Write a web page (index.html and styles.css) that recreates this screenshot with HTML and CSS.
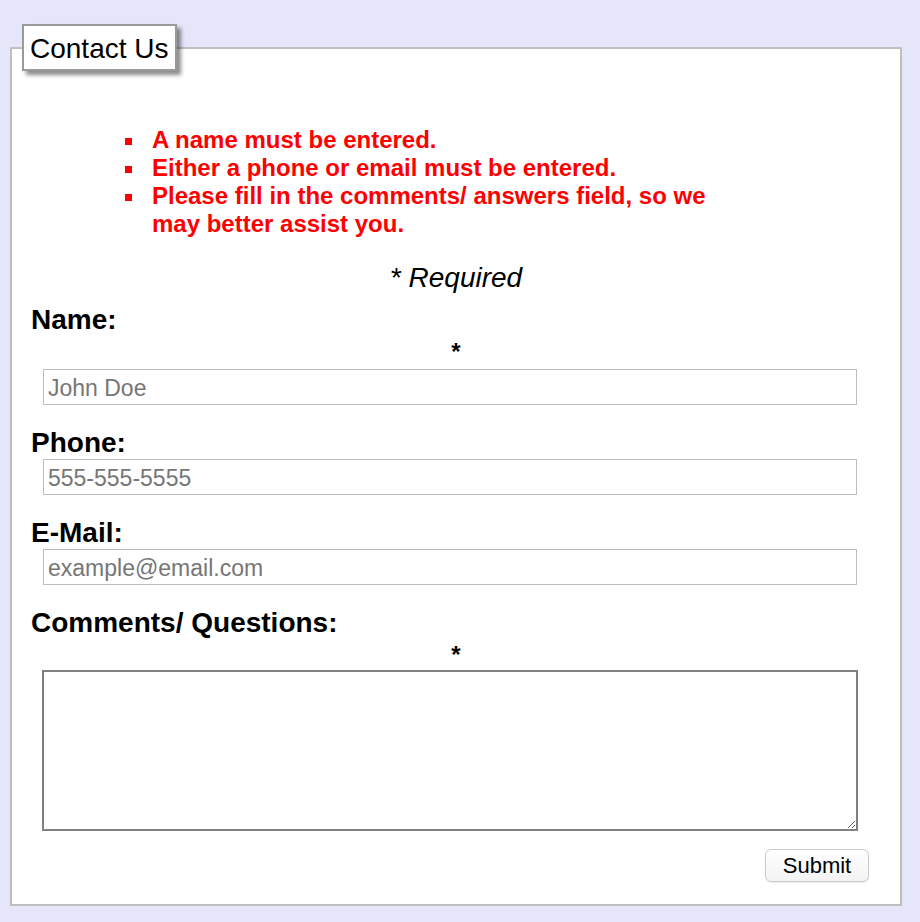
FILE: index.html
```html
<!DOCTYPE html>
<html lang="en">
<head>
<meta charset="utf-8">
<title>Contact Us</title>
<link rel="stylesheet" href="styles.css">
</head>
<body>
<form class="contact" onsubmit="return false">
  <fieldset class="panel">
    <legend class="panel-title">Contact Us</legend>
    <div class="panel-body">
      <ul class="errors">
        <li>A name must be entered.</li>
        <li>Either a phone or email must be entered.</li>
        <li>Please fill in the comments/ answers field, so we may better assist you.</li>
      </ul>
      <p class="required-note">* Required</p>
      <div class="field">
        <label class="field-label" for="name">Name:</label>
        <div class="req-mark">*</div>
        <input class="text-input spaced" id="name" type="text" placeholder="John Doe">
      </div>
      <div class="field">
        <label class="field-label" for="phone">Phone:</label>
        <input class="text-input" id="phone" type="text" placeholder="555-555-5555">
      </div>
      <div class="field">
        <label class="field-label" for="email">E-Mail:</label>
        <input class="text-input" id="email" type="text" placeholder="example@email.com">
      </div>
      <div class="field field-last">
        <label class="field-label" for="comments">Comments/ Questions:</label>
        <div class="req-mark">*</div>
        <textarea class="text-area" id="comments"></textarea>
      </div>
      <div class="actions">
        <button class="submit" type="submit">Submit</button>
      </div>
    </div>
  </fieldset>
</form>
</body>
</html>
```

FILE: styles.css
```css
html {
  background: #e6e6fa;
}

body {
  margin: 8px;
  background: #e6e6fa;
  font-family: "Liberation Sans", Arial, sans-serif;
  color: #000;
}

.contact {
  margin: 0;
}

.panel {
  box-sizing: border-box;
  width: 892px;
  margin: 16px 2px 0;
  padding: 0 10px;
  border: 2px solid #bfbfbf;
  background: #fff;
}

.panel-title {
  padding: 6px 6px 4px;
  font-size: 28px;
  line-height: 33px;
  border: 2px solid #9a9a9a;
  background: #fff;
  box-shadow: 4px 4px 4px rgba(0, 0, 0, 0.45);
}

.panel-body {
  padding: 55px 0 22px;
}

.errors {
  width: 584px;
  margin: 0 0 0 90px;
  padding: 0 0 0 34px;
  list-style: square;
  color: #ff0000;
  font-weight: bold;
  font-size: 24px;
  line-height: 28px;
}

.errors li {
  padding-left: 6px;
}

.required-note {
  margin: 24px 0 10px;
  text-align: center;
  font-style: italic;
  font-size: 28px;
  line-height: 32px;
}

.field {
  margin-bottom: 22px;
}

.field-last {
  margin-bottom: 0;
}

.field-label {
  display: block;
  padding-left: 9px;
  font-weight: bold;
  font-size: 28px;
  line-height: 32px;
}

.req-mark {
  text-align: center;
  font-weight: bold;
  font-size: 24px;
  line-height: 31px;
}

.text-input {
  display: block;
  box-sizing: border-box;
  width: 814px;
  height: 36px;
  margin: 0 0 0 21px;
  padding: 2px 4px 0;
  border: 1px solid #bdbdbd;
  border-radius: 0;
  font-family: "Liberation Sans", Arial, sans-serif;
  font-size: 23px;
  color: #000;
  background: #fff;
  outline: none;
}

.text-input.spaced {
  margin-top: 2px;
}

.text-input::placeholder {
  color: #767676;
}

.text-area {
  display: block;
  box-sizing: border-box;
  width: 816px;
  height: 161px;
  margin: 0 0 0 20px;
  padding: 2px;
  border: 2px solid #808080;
  font-family: "Liberation Sans", Arial, sans-serif;
  font-size: 16px;
  background: #fff;
  outline: none;
}

.actions {
  display: flex;
  justify-content: flex-end;
  margin-top: 18px;
  padding-right: 21px;
}

.submit {
  box-sizing: border-box;
  width: 104px;
  height: 33px;
  padding: 0;
  border: 1px solid #cacaca;
  border-radius: 6px;
  background: linear-gradient(#ffffff, #f3f3f3);
  box-shadow: 0 1px 1px rgba(0, 0, 0, 0.08);
  font-family: "Liberation Sans", Arial, sans-serif;
  font-size: 22px;
  color: #000;
}
```
